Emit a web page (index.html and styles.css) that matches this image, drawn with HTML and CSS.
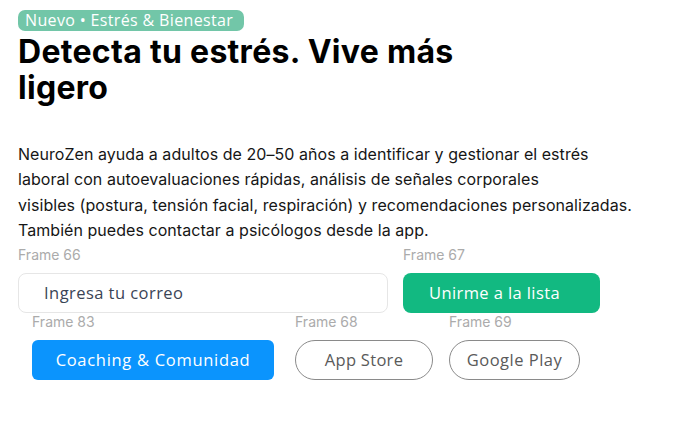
FILE: index.html
```html
<!DOCTYPE html>
<html lang="es">
<head>
<meta charset="utf-8">
<title>NeuroZen</title>
<link rel="stylesheet" href="styles.css">
</head>
<body>
<main class="hero">
  <span class="badge">Nuevo • Estrés &amp; Bienestar</span>
  <h1 class="title">Detecta tu estrés. Vive más<br>ligero</h1>
  <p class="lead">NeuroZen ayuda a adultos de 20–50 años a identificar y gestionar el estrés<br>laboral con autoevaluaciones rápidas, análisis de señales corporales<br>visibles (postura, tensión facial, respiración) y recomendaciones personalizadas.<br>También puedes contactar a psicólogos desde la app.</p>

  <div class="row row-form">
    <div class="frame frame-input">
      <span class="frame-label">Frame 66</span>
      <div class="field">Ingresa tu correo</div>
    </div>
    <div class="frame">
      <span class="frame-label">Frame 67</span>
      <button class="btn btn-green">Unirme a la lista</button>
    </div>
  </div>

  <div class="row row-links">
    <div class="frame">
      <span class="frame-label">Frame 83</span>
      <button class="btn btn-blue">Coaching &amp; Comunidad</button>
    </div>
    <div class="frame">
      <span class="frame-label">Frame 68</span>
      <button class="btn btn-pill btn-appstore">App Store</button>
    </div>
    <div class="frame">
      <span class="frame-label">Frame 69</span>
      <button class="btn btn-pill btn-play">Google Play</button>
    </div>
  </div>
</main>
</body>
</html>
```
FILE: styles.css
```css
* { box-sizing: border-box; }
html, body { margin: 0; padding: 0; background: #ffffff; }
body { font-family: "Inter", "Liberation Sans", sans-serif; color: #111; }

.hero {
  padding: 10px 0 0 18px;
  display: flex;
  flex-direction: column;
  align-items: flex-start;
}

.badge {
  display: inline-block;
  height: 21px;
  padding: 0 11px 0 7px;
  border-radius: 7px;
  background: #72c6a8;
  color: #ffffff;
  font-family: "Open Sans", sans-serif;
  font-size: 16px;
  line-height: 21px;
  letter-spacing: 0.35px;
}

.title {
  margin: 3px 0 0 0;
  font-family: "Inter", sans-serif;
  font-weight: 700;
  font-size: 32px;
  line-height: 36px;
  color: #000;
  letter-spacing: 0.3px;
}

.lead {
  margin: 36px 0 0 0;
  font-family: "Inter", sans-serif;
  font-size: 16px;
  line-height: 25.4px;
  letter-spacing: 0.05px;
  color: #161616;
}

.row { display: grid; }
.row-form {
  margin-top: 2px;
  grid-template-columns: 385px 197px;
}
.row-links {
  margin-left: 14px;
  grid-template-columns: 263px 154px 131px;
}

.frame {
  display: flex;
  flex-direction: column;
  align-items: flex-start;
  gap: 10px;
}

.frame-label {
  font-family: "Inter", sans-serif;
  font-size: 14px;
  line-height: 17px;
  color: #ababab;
}

.field {
  width: 370px;
  height: 40px;
  border: 1.5px solid #e6e6e6;
  border-radius: 8px;
  padding-left: 25px;
  display: flex;
  align-items: center;
  font-family: "Open Sans", sans-serif;
  font-size: 16.5px;
  letter-spacing: 0.45px;
  color: #3a4456;
}

.btn {
  height: 40px;
  border: none;
  margin: 0;
  font-family: "Open Sans", sans-serif;
  font-size: 16.5px;
  letter-spacing: 0.45px;
  cursor: pointer;
  display: flex;
  align-items: center;
}

.btn-green {
  width: 197px;
  border-radius: 8px;
  background: #12b981;
  color: #fff;
  padding: 0 0 0 26px;
  justify-content: flex-start;
  letter-spacing: 0.4px;
}

.btn-blue {
  width: 242px;
  border-radius: 6px;
  background: #0b94fd;
  color: #fff;
  justify-content: center;
  letter-spacing: 0.7px;
}

.btn-pill {
  background: #fff;
  border: 1.5px solid #8a8a8a;
  border-radius: 20px;
  color: #5a5a5a;
  justify-content: center;
}
.btn-appstore { width: 138px; letter-spacing: 0.3px; }
.btn-play { width: 131px; letter-spacing: 0.5px; }
```
